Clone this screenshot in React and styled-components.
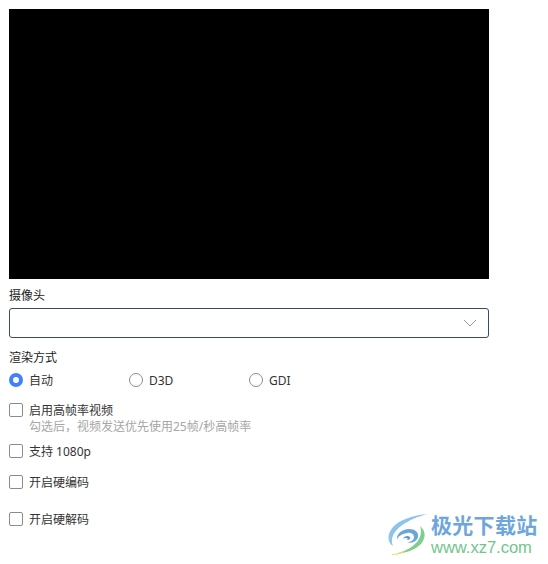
import React from "react";
import styled, { createGlobalStyle } from "styled-components";

const Global = createGlobalStyle`
  html, body { margin: 0; padding: 0; background: #fff; }
  body { font-family: "Noto Sans", "Noto Sans CJK SC", sans-serif; }
`;
const Page = styled.div`
  position: relative;
  width: 548px;
  height: 564px;
  overflow: hidden;
  padding: 9px 0 0 9px;
  box-sizing: border-box;
  font-size: 12px;
  color: #333;
`;
const Video = styled.div`
  width: 480px;
  height: 270px;
  background: #000;
`;
const Label = styled.div`
  font-size: 12px;
  height: 18px;
  line-height: 20px;
  color: #1a1a1a;
  margin-top: ${(p) => p.$top}px;
`;
const Select = styled.div`
  width: 480px;
  height: 30px;
  margin-top: 4px;
  box-sizing: border-box;
  border: 1px solid #3a4a68;
  border-radius: 3px;
  display: flex;
  align-items: center;
  justify-content: flex-end;
  padding-right: 11px;
`;
const RadioRow = styled.div`
  display: flex;
  height: 20px;
  margin-top: 4px;
`;
const RadioItem = styled.div`
  width: 120px;
  display: flex;
  align-items: center;
  gap: 6px;
`;
const RadioDot = styled.span`
  width: 14px;
  height: 14px;
  box-sizing: border-box;
  border-radius: 50%;
  border: ${(p) => (p.$on ? "4px solid #4080ff" : "1px solid #8c8c8c")};
  background: #fff;
`;
const RowText = styled.span`
  height: 20px;
  line-height: 22px;
`;
const CheckRow = styled.div`
  display: flex;
  align-items: center;
  gap: 6px;
  height: 20px;
  margin-top: ${(p) => p.$top}px;
`;
const Box = styled.span`
  width: 14px;
  height: 14px;
  box-sizing: border-box;
  border: 1px solid #8c8c8c;
  border-radius: 2px;
  background: #fff;
`;
const Hint = styled.div`
  font-size: 12px;
  height: 14px;
  line-height: 16px;
  color: #a6a6a6;
  margin-left: 20px;
  margin-top: -1px;
`;
const Watermark = styled.div`
  position: absolute;
  left: 388px;
  top: 513px;
  display: flex;
  align-items: flex-start;
  gap: 1px;
`;
const MarkText = styled.div`
  display: flex;
  flex-direction: column;
`;
const MarkTitle = styled.div`
  font-size: 21px;
  line-height: 24px;
  font-weight: 700;
  letter-spacing: 0.3px;
  color: #6ea6dc;
  white-space: nowrap;
`;
const MarkUrl = styled.div`
  font-family: "Liberation Sans", sans-serif;
  font-size: 16.5px;
  line-height: 19px;
  margin-top: 1px;
  color: #72c58a;
  white-space: nowrap;
`;

export default function App() {
  return (
    <Page>
      <Global />
      <Video />
      <Label $top={7}>摄像头</Label>
      <Select>
        <svg width="14" height="8" viewBox="0 0 14 8" fill="none" stroke="#9a9a9a" strokeWidth="1">
          <path d="M1 1l6 6 6-6" />
        </svg>
      </Select>
      <Label $top={10}>渲染方式</Label>
      <RadioRow>
        <RadioItem><RadioDot $on /><RowText>自动</RowText></RadioItem>
        <RadioItem><RadioDot /><RowText>D3D</RowText></RadioItem>
        <RadioItem><RadioDot /><RowText>GDI</RowText></RadioItem>
      </RadioRow>
      <CheckRow $top={10}><Box /><RowText>启用高帧率视频</RowText></CheckRow>
      <Hint>勾选后，视频发送优先使用25帧/秒高帧率</Hint>
      <CheckRow $top={8}><Box /><RowText>支持 1080p</RowText></CheckRow>
      <CheckRow $top={11}><Box /><RowText>开启硬编码</RowText></CheckRow>
      <CheckRow $top={17}><Box /><RowText>开启硬解码</RowText></CheckRow>
      <Watermark>
        <svg width="42" height="42" viewBox="0 0 42 42" fill="none">
          <path d="M40 1C27 2 12 6 5 14-1 21-1 29 5 33 2 27 5 19 13 13 21 7 31 3 40 1z" fill="#8cc4ea" />
          <path d="M9 27c-1-6 5-11 12-11 6 0 10 3 9 8-1 4-6 7-11 5 4 0 7-2 7-5 0-3-3-5-7-4-5 1-9 3-10 7z" fill="#6ba6d8" />
          <path d="M15 26c1-3 5-4 7-2 1 2-1 3-3 3 1-1 1-2-1-2-1 0-2 0-3 1z" fill="#5d9ad2" />
          <path d="M32 13c6 5 6 12 1 18-6 6-15 9-25 10 8-3 16-6 21-12 4-5 5-11 3-16z" fill="#7fcf8c" />
          <path d="M4 41c5 0 10-2 15-4-4 3-9 5-15 5z" fill="#e6dc7a" />
        </svg>
        <MarkText>
          <MarkTitle>极光下载站</MarkTitle>
          <MarkUrl>www.xz7.com</MarkUrl>
        </MarkText>
      </Watermark>
    </Page>
  );
}
